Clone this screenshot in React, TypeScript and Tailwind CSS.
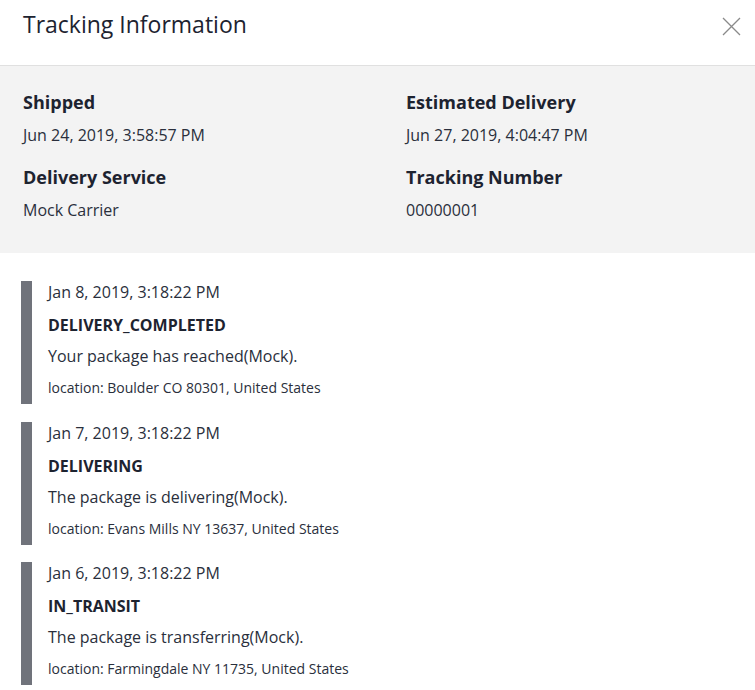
import React from "react";

const events = [
  {
    date: "Jan 8, 2019, 3:18:22 PM",
    status: "DELIVERY_COMPLETED",
    desc: "Your package has reached(Mock).",
    loc: "location: Boulder CO 80301, United States",
  },
  {
    date: "Jan 7, 2019, 3:18:22 PM",
    status: "DELIVERING",
    desc: "The package is delivering(Mock).",
    loc: "location: Evans Mills NY 13637, United States",
  },
  {
    date: "Jan 6, 2019, 3:18:22 PM",
    status: "IN_TRANSIT",
    desc: "The package is transferring(Mock).",
    loc: "location: Farmingdale NY 11735, United States",
  },
];

function Field({ label, value }: { label: string; value: string }) {
  return (
    <div>
      <div className="text-[18px] leading-[24px] font-bold text-[#1d2330]">{label}</div>
      <div className="mt-[10px] text-[16px] leading-[22px] text-[#2a2f3c]">{value}</div>
    </div>
  );
}

export default function App() {
  return (
    <div
      className="w-[755px] h-[690px] bg-white overflow-hidden"
      style={{ fontFamily: '"Open Sans", "Noto Sans", sans-serif' }}
    >
      <div className="h-[66px] border-b border-[#e0e0e0] flex items-start justify-between pl-[23px] pr-[14px] pt-[9px]">
        <div className="text-[23px] leading-[30px] text-[#1d2330]">Tracking Information</div>
        <button className="mt-[8px] w-[19px] h-[19px] flex items-center justify-center">
          <svg width="19" height="19" viewBox="0 0 19 19">
            <path d="M1 1 L18 18 M18 1 L1 18" stroke="#8a8a8a" strokeWidth="1.3" fill="none" />
          </svg>
        </button>
      </div>

      <div className="bg-[#f3f3f3] h-[187px] pl-[23px] pt-[24px]">
        <div className="grid grid-cols-[383px_1fr] gap-y-[19px]">
          <Field label="Shipped" value="Jun 24, 2019, 3:58:57 PM" />
          <Field label="Estimated Delivery" value="Jun 27, 2019, 4:04:47 PM" />
          <Field label="Delivery Service" value="Mock Carrier" />
          <Field label="Tracking Number" value="00000001" />
        </div>
      </div>

      <div className="pt-[28px] pl-[21px] flex flex-col gap-[17.5px]">
        {events.map((e) => (
          <div key={e.date} className="flex">
            <div className="w-[11px] bg-[#70737b] shrink-0" />
            <div className="pl-[16px] pb-[7px]">
              <div className="text-[16px] leading-[22px] text-[#2a2f3c]">{e.date}</div>
              <div className="mt-[11px] text-[16px] leading-[22px] font-bold text-[#1d2330]">{e.status}</div>
              <div className="mt-[9px] text-[16px] leading-[22px] text-[#2a2f3c]">{e.desc}</div>
              <div className="mt-[12px] text-[14px] leading-[18px] text-[#2a2f3c]">{e.loc}</div>
            </div>
          </div>
        ))}
      </div>
    </div>
  );
}
